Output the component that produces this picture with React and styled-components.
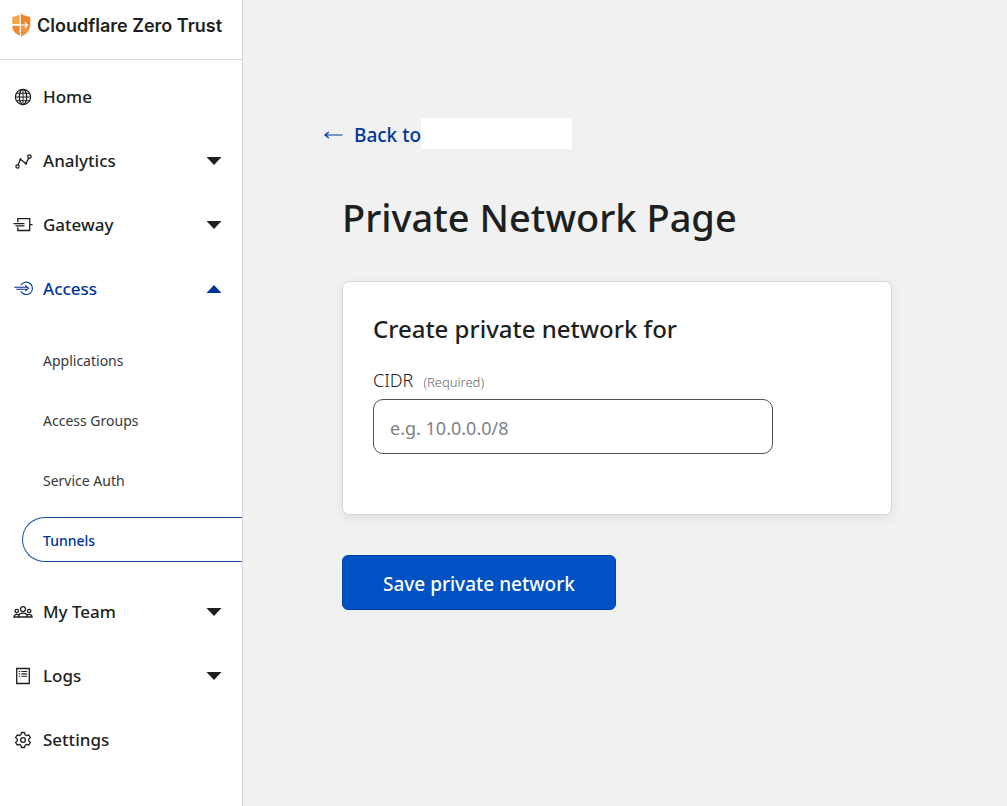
import React, { useState } from "react";
import styled, { createGlobalStyle } from "styled-components";

const GlobalStyle = createGlobalStyle`
    * {
        box-sizing: border-box;
    }
    body {
        margin: 0;
        color: #1d1f20;
        background: #f1f1f1;
        font-family: "Noto Sans", "Open Sans", sans-serif;
    }
    h1, h2, ul {
        margin: 0;
        padding: 0;
    }
    a {
        text-decoration: none;
    }
`;

const Page = styled.div`
    display: flex;
    min-height: 100vh;
`;

const Sidebar = styled.aside`
    flex: 0 0 243px;
    background: #fff;
    border-right: 1px solid #d5d7d8;
`;

const Brand = styled.header`
    display: flex;
    align-items: flex-start;
    gap: 5px;
    height: 60px;
    padding: 13px 0 0 12px;
    border-bottom: 1px solid #d5d7d8;
    color: #1d1f20;
    font-family: Inter, sans-serif;
    font-size: 18px;
    font-weight: 600;
    line-height: 26px;
    white-space: nowrap;
`;

const List = styled.ul`
    list-style: none;
`;

const Nav = styled.nav`
    padding-top: 5px;
`;

const navRow = `
    display: flex;
    align-items: center;
    width: 100%;
    height: 64px;
    padding: 0 20px 0 12px;
    border: 0;
    background: none;
    font-family: inherit;
    font-size: 17px;
    font-weight: 500;
    line-height: 24px;
    text-align: left;
    cursor: pointer;
`;

const NavLink = styled.a`
    ${navRow}
    color: #1d1f20;
`;

const NavButton = styled.button`
    ${navRow}
    color: ${props => (props.$open ? "#003399" : "#1d1f20")};
`;

const IconBox = styled.span`
    display: flex;
    justify-content: center;
    width: 22px;
    margin-right: 9px;
`;

const NavText = styled.span`
    flex: 1;
`;

const SubList = styled(List)`
    padding: 9px 0 10px;
    li {
        padding: 7px 0 8px 22px;
    }
`;

const SubLink = styled.a`
    display: flex;
    align-items: center;
    height: 45px;
    padding: 2px 0 0 20px;
    border: 1px solid ${props => (props.$active ? "#1450a0" : "transparent")};
    border-right: 0;
    border-radius: 23px 0 0 23px;
    color: ${props => (props.$active ? "#003399" : "#36393a")};
    font-size: 14px;
    font-weight: ${props => (props.$active ? 500 : 400)};
`;

const Main = styled.main`
    flex: 1;
    padding: 118px 115px 40px 99px;
`;

const BackLink = styled.a`
    display: flex;
    align-items: center;
    height: 31px;
    margin-left: -18px;
    color: #003799;
    font-size: 19px;
    font-weight: 500;
    line-height: 31px;
    svg {
        margin: 3px 11px 0 0;
    }
`;

const BackText = styled.span`
    padding-top: 4px;
`;

const AccountName = styled.span`
    width: 151px;
    height: 31px;
    background: #fff;
`;

const Title = styled.h1`
    margin: 44px 0 40px;
    font-size: 38px;
    font-weight: 500;
    line-height: 48px;
`;

const Card = styled.section`
    max-width: 550px;
    padding: 30px 30px 60px;
    border: 1px solid #d5d7d8;
    border-radius: 7px;
    background: #fff;
    box-shadow: 0 4px 12px rgba(0, 0, 0, 0.07);
`;

const CardTitle = styled.h2`
    margin-bottom: 22px;
    font-size: 24px;
    font-weight: 500;
    line-height: 34px;
`;

const Label = styled.label`
    display: block;
    margin-bottom: 7px;
    font-size: 18px;
    font-weight: 300;
    line-height: 24px;
`;

const Required = styled.span`
    margin-left: 10px;
    color: #62676a;
    font-size: 13px;
    line-height: 1;
`;

const Input = styled.input`
    display: block;
    width: 100%;
    max-width: 400px;
    height: 55px;
    padding: 2px 16px 0;
    border: 1px solid #4e5255;
    border-radius: 10px;
    background: #fff;
    color: #1d1f20;
    font-family: inherit;
    font-size: 18px;
    &::placeholder {
        color: #808285;
        opacity: 1;
    }
`;

const SaveButton = styled.button`
    height: 55px;
    margin-top: 40px;
    padding: 2px 40px 0;
    border: 1px solid #0045ad;
    border-radius: 6px;
    background: #0051c3;
    color: #fff;
    font-family: inherit;
    font-size: 19px;
    font-weight: 500;
    cursor: pointer;
`;

const Svg = ({ children, width = 20, height = 18 }) => (
    <svg
        width={width}
        height={height}
        viewBox={`0 0 ${width} ${height}`}
        fill="none"
        stroke="currentColor"
        strokeWidth="1.3"
        aria-hidden="true"
    >
        {children}
    </svg>
);

const Shield = () => (
    <svg width="20" height="24" viewBox="0 0 20 24" aria-hidden="true">
        <path d="M9 0.5C6.2 2.7 3.6 3.5 0.3 3.7V11H9Z" fill="#f9a649" />
        <path d="M9 0.5C12 2.7 15 3.5 18.3 3.7V12H9Z" fill="#ef8428" />
        <path d="M0.3 12.6H8V23C3 20.8 0.3 17.6 0.3 12.6Z" fill="#f18a2c" />
        <path d="M9 11H18.3C18.3 17 15 21.3 9 23.5Z" fill="#ef9440" />
        <path d="M8.3 1V23.5M0 12H15.2M12.6 9.2L15.4 12L12.6 14.8" fill="none" stroke="#fff" strokeWidth="1.2" />
    </svg>
);

const HomeIcon = () => (
    <Svg>
        <circle cx="10" cy="9" r="7.6" />
        <ellipse cx="10" cy="9" rx="3.7" ry="7.6" />
        <path d="M10 1.4V16.6M2.4 9H17.6M3.6 5.3H16.4M3.6 12.7H16.4" strokeWidth="1" />
    </Svg>
);

const AnalyticsIcon = () => (
    <Svg>
        <circle cx="4.5" cy="14.5" r="1.6" />
        <circle cx="16.4" cy="4.5" r="1.7" />
        <path d="M5 12.9L7.4 7.2L12.9 11.5L15.8 6.1" />
        <circle cx="7.5" cy="7.3" r="1" fill="currentColor" stroke="none" />
        <circle cx="13" cy="11.5" r="1.2" fill="currentColor" stroke="none" />
    </Svg>
);

const GatewayIcon = () => (
    <Svg>
        <path d="M4.8 6.2V2.7H16.7V14.5H4.8V11.2M0.5 7.6H11.5M2.5 9.8H11.5M16.7 8.6H19.6" />
    </Svg>
);

const AccessIcon = () => (
    <Svg>
        <path d="M7.8 5.3A6.2 6.2 0 1 1 7.8 11.3M1.3 7.3H14.8M3.3 9.2H14.8M12.2 5.4L15.6 8.3L12.2 11.2" strokeWidth="1.1" />
    </Svg>
);

const TeamIcon = () => (
    <Svg>
        <circle cx="10" cy="6.1" r="2.5" />
        <circle cx="3.8" cy="8" r="1.7" />
        <circle cx="16.2" cy="8" r="1.7" />
        <path d="M5.6 14C5.7 8.9 14.3 8.9 14.4 14M0.9 14C0.9 11.6 3.6 10.7 5.7 11.8M19.1 14C19.1 11.6 16.4 10.7 14.3 11.8M0.3 14H19.7" />
    </Svg>
);

const LogsIcon = () => (
    <Svg>
        <path d="M3.7 1.5H16.3V16.5H3.7Z" />
        <path d="M5.8 4.5H7.2M5.8 6.9H7.2M5.8 9.3H7.2M8.4 4.5H14.2M8.4 6.9H14.2M8.4 9.3H14.2" strokeWidth="1.1" />
    </Svg>
);

const SettingsIcon = () => (
    <Svg>
        <circle cx="10" cy="9" r="2.4" />
        <path
            strokeLinejoin="round"
            d="M8.5 1.5H11.5L12.1 3.8L13.5 4.6L15.8 4L17.4 6.5L15.7 8.1V9.9L17.4 11.5L15.8 14L13.5 13.4L12.1 14.2L11.5 16.5H8.5L7.9 14.2L6.5 13.4L4.2 14L2.6 11.5L4.3 9.9V8.1L2.6 6.5L4.2 4L6.5 4.6L7.9 3.8Z"
        />
    </Svg>
);

const Caret = ({ open }) => (
    <svg width="16" height="8" viewBox="0 0 16 8" fill="currentColor" aria-hidden="true">
        <path d={open ? "M0.5 8L8 0L15.5 8Z" : "M0.5 0H15.5L8 8Z"} />
    </svg>
);

const BackArrow = () => (
    <Svg width={19} height={10}>
        <path d="M18.5 5H1M4.8 2L1 5L4.8 8" strokeWidth="1.2" />
    </Svg>
);

const items = [
    { text: "Home", icon: HomeIcon, link: true },
    { text: "Analytics", icon: AnalyticsIcon },
    { text: "Gateway", icon: GatewayIcon },
    { text: "Access", icon: AccessIcon, sub: ["Applications", "Access Groups", "Service Auth", "Tunnels"] },
    { text: "My Team", icon: TeamIcon },
    { text: "Logs", icon: LogsIcon },
    { text: "Settings", icon: SettingsIcon, link: true }
];

const NavItem = ({ text, icon: Icon, link, sub, open, onToggle }) => (
    <li>
        {link ? (
            <NavLink href="#">
                <IconBox><Icon /></IconBox>
                <NavText>{text}</NavText>
            </NavLink>
        ) : (
            <NavButton type="button" $open={open} aria-expanded={open} onClick={onToggle}>
                <IconBox><Icon /></IconBox>
                <NavText>{text}</NavText>
                <Caret open={open} />
            </NavButton>
        )}
        {open && sub && (
            <SubList>
                {sub.map(name => (
                    <li key={name}>
                        <SubLink href="#" $active={name === "Tunnels"}>{name}</SubLink>
                    </li>
                ))}
            </SubList>
        )}
    </li>
);

export default () => {
    const [opened, setOpened] = useState("Access");
    const [cidr, setCidr] = useState("");

    return (
        <Page>
            <GlobalStyle />
            <Sidebar>
                <Brand>
                    <Shield />
                    Cloudflare Zero Trust
                </Brand>
                <Nav>
                    <List>
                        {items.map(item => (
                            <NavItem
                                key={item.text}
                                {...item}
                                open={opened === item.text}
                                onToggle={() => setOpened(opened === item.text ? "" : item.text)}
                            />
                        ))}
                    </List>
                </Nav>
            </Sidebar>
            <Main>
                <BackLink href="#">
                    <BackArrow />
                    <BackText>Back to</BackText>
                    <AccountName />
                </BackLink>
                <Title>Private Network Page</Title>
                <form onSubmit={e => e.preventDefault()}>
                    <Card>
                        <CardTitle>Create private network for</CardTitle>
                        <Label htmlFor="cidr">
                            CIDR<Required>(Required)</Required>
                        </Label>
                        <Input
                            id="cidr"
                            placeholder="e.g. 10.0.0.0/8"
                            value={cidr}
                            onChange={e => setCidr(e.target.value)}
                        />
                    </Card>
                    <SaveButton type="submit">Save private network</SaveButton>
                </form>
            </Main>
        </Page>
    );
};
